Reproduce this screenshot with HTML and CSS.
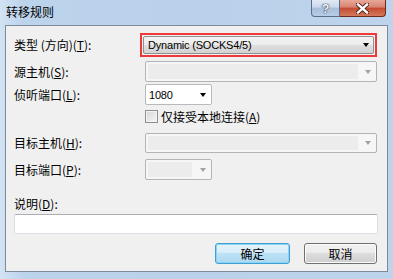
FILE: index.html
```html
<!DOCTYPE html>
<html>
<head>
  <title>转移规则</title>
  <meta http-equiv="Content-Type" content="text/html; charset=utf-8">
  <link rel="stylesheet" href="styles.css">
</head>
<body>
<div class="window">
  <div class="titlebar">
    <span class="title">转移规则</span>
    <div class="caption-buttons">
      <div class="cap-help">?</div>
      <div class="cap-close">
        <svg width="13" height="11" viewBox="0 0 13 11">
          <path d="M2 1.5 L11 9.5 M11 1.5 L2 9.5" stroke="#4a1a12" stroke-width="4.2" stroke-linecap="square"/>
          <path d="M2 1.5 L11 9.5 M11 1.5 L2 9.5" stroke="#ffffff" stroke-width="2.4" stroke-linecap="square"/>
        </svg>
      </div>
    </div>
  </div>
  <div class="client">
    <div class="row row-type">
      <label class="lbl lbl-type">类型 (方向)(<u>T</u>):</label>
      <div class="mark">
        <div class="dropdown">
          <span class="value">Dynamic (SOCKS4/5)</span>
          <span class="arrow"></span>
        </div>
      </div>
    </div>
    <div class="row row-src">
      <label class="lbl">源主机(<u>S</u>):</label>
      <div class="combo combo-wide disabled">
        <span class="field"></span>
        <span class="arrow"></span>
      </div>
    </div>
    <div class="row row-listen">
      <label class="lbl">侦听端口(<u>L</u>):</label>
      <div class="combo combo-small">
        <span class="value">1080</span>
        <span class="arrow"></span>
      </div>
    </div>
    <div class="row row-check">
      <span class="checkbox"></span>
      <span class="check-text">仅接受本地连接(<u>A</u>)</span>
    </div>
    <div class="row row-dst">
      <label class="lbl">目标主机(<u>H</u>):</label>
      <div class="combo combo-wide disabled">
        <span class="field"></span>
        <span class="arrow"></span>
      </div>
    </div>
    <div class="row row-dport">
      <label class="lbl">目标端口(<u>P</u>):</label>
      <div class="combo combo-small disabled">
        <span class="field"></span>
        <span class="arrow"></span>
      </div>
    </div>
    <div class="desc-label">说明(<u>D</u>):</div>
    <div class="textbox"></div>
    <div class="buttons">
      <button class="btn btn-default">确定</button>
      <button class="btn">取消</button>
    </div>
  </div>
</div>
</body>
</html>
```

FILE: styles.css
```css
body {
  margin: 0;
  font-family: "Noto Sans CJK SC", "Liberation Sans", sans-serif;
  font-size: 12px;
  color: #000;
}

.window {
  width: 393px;
  height: 279px;
  display: flex;
  flex-direction: column;
  overflow: hidden;
  background: linear-gradient(to right, #d3e3f4 0, #bcd3ec 6%, #b9d1ea 50%, #bdd4ec 100%);
}

/* title bar */
.titlebar {
  height: 25px;
  display: flex;
  align-items: flex-start;
  flex-shrink: 0;
}

.title {
  padding: 3px 0 0 6px;
  line-height: 17px;
  font-size: 12px;
  color: #000;
}

.caption-buttons {
  margin-left: auto;
  margin-right: 7px;
  display: flex;
}

.cap-help,
.cap-close {
  height: 17px;
  box-sizing: border-box;
  display: flex;
  align-items: center;
  justify-content: center;
}

.cap-help {
  width: 29px;
  border: 1px solid #596d8a;
  border-top: 0;
  border-radius: 0 0 0 4px;
  background: linear-gradient(#e1eaf5, #c9d8ea 45%, #a9bfd9 50%, #b7cde6);
  font-family: "Liberation Sans", sans-serif;
  font-weight: bold;
  font-size: 13px;
  color: #f4f6f8;
  text-shadow: 0 0 1px #2d3d52, 0 0 1px #2d3d52, 0 0 1px #2d3d52;
}

.cap-close {
  width: 46px;
  border: 1px solid #6e2a1e;
  border-top: 0;
  border-left: 0;
  border-radius: 0 0 4px 0;
  background: linear-gradient(#e9a899, #d88370 45%, #c34a31 50%, #d5795b);
}

/* client area */
.client {
  margin: 0 5px;
  height: 247px;
  box-sizing: border-box;
  border: 1px solid #7d8a9a;
  background: #f0f0f0;
  padding: 7px 10px 0 8px;
  display: flex;
  flex-direction: column;
}

.row {
  display: flex;
  align-items: center;
  flex-shrink: 0;
}

.lbl {
  width: 131px;
  flex-shrink: 0;
  line-height: 16px;
}

.lbl-type {
  width: 126px;
}

.row-type { height: 24px; }
.row-src { height: 21px; margin-top: 4px; }
.row-listen { height: 21px; margin-top: 2px; }
.row-check { height: 13px; margin-top: 5px; padding-left: 131px; }
.row-dst { height: 20px; margin-top: 10px; }
.row-dport { height: 21px; margin-top: 6px; }

/* red highlight around type selector */
.mark {
  width: 240px;
  height: 24px;
  box-sizing: border-box;
  border: 2px solid #ee3a3a;
  padding: 1px;
}

.dropdown {
  height: 18px;
  box-sizing: border-box;
  border: 1px solid #8e8f8f;
  border-radius: 2px;
  background: linear-gradient(#f3f3f3, #ececec 50%, #dedede 50%, #d3d3d3);
  display: flex;
  align-items: center;
  padding: 0 4px 0 4px;
}

.value {
  font-family: "Liberation Sans", sans-serif;
  font-size: 11px;
  letter-spacing: -0.2px;
  line-height: 16px;
}

.arrow {
  margin-left: auto;
  width: 0;
  height: 0;
  border-left: 3.5px solid transparent;
  border-right: 3.5px solid transparent;
  border-top: 4px solid #000;
}

.combo {
  height: 100%;
  box-sizing: border-box;
  border: 1px solid #b7b9bd;
  border-radius: 2px;
  background: #fff;
  display: flex;
  align-items: center;
  padding: 0 5px 0 2px;
}

.combo-wide { width: 233px; }
.combo-small { width: 67px; }

.combo .value {
  padding-left: 1px;
}

.combo.disabled {
  border-color: #b4b4b4;
  background: #f6f6f6;
  padding: 2px 5px 2px 2px;
}

.combo .field {
  align-self: stretch;
  background: #ececec;
}

.combo-wide .field { width: 210px; }
.combo-small .field { width: 44px; }

.combo.disabled .arrow {
  border-top-color: #a2a2a2;
}

/* checkbox */
.checkbox {
  width: 13px;
  height: 13px;
  box-sizing: border-box;
  border: 1px solid #8f8f8f;
  background: linear-gradient(135deg, #d6d6d6, #f6f6f6);
  box-shadow: inset 0 0 0 1px #f4f4f4;
  margin-right: 3px;
}

.check-text {
  line-height: 16px;
}

/* description */
.desc-label {
  margin-top: 15px;
  height: 17px;
  line-height: 17px;
  flex-shrink: 0;
}

.textbox {
  margin-top: 2px;
  height: 20px;
  width: 364px;
  box-sizing: border-box;
  background: #fff;
  border: 1px solid #dbdfe6;
  border-top-color: #abadb3;
  border-radius: 2px;
  flex-shrink: 0;
}

/* buttons */
.buttons {
  margin-top: 9px;
  display: flex;
  justify-content: flex-end;
  gap: 14px;
}

.btn {
  height: 21px;
  width: 73px;
  box-sizing: border-box;
  border: 1px solid #707070;
  border-radius: 3px;
  background: linear-gradient(#f2f2f2, #ebebeb 50%, #dddddd 50%, #cfcfcf);
  box-shadow: inset 0 0 0 1px #fbfbfb;
  font-family: "Noto Sans CJK SC", sans-serif;
  font-size: 12px;
  line-height: 16px;
  padding: 0;
  color: #000;
}

.btn-default {
  width: 75px;
  border-color: #3c9fd6;
  background: linear-gradient(#e6f4fb, #d5ecf9 50%, #bde2f6 50%, #abd8f1);
  box-shadow: inset 0 0 0 1px #8fd2f3;
}
```
